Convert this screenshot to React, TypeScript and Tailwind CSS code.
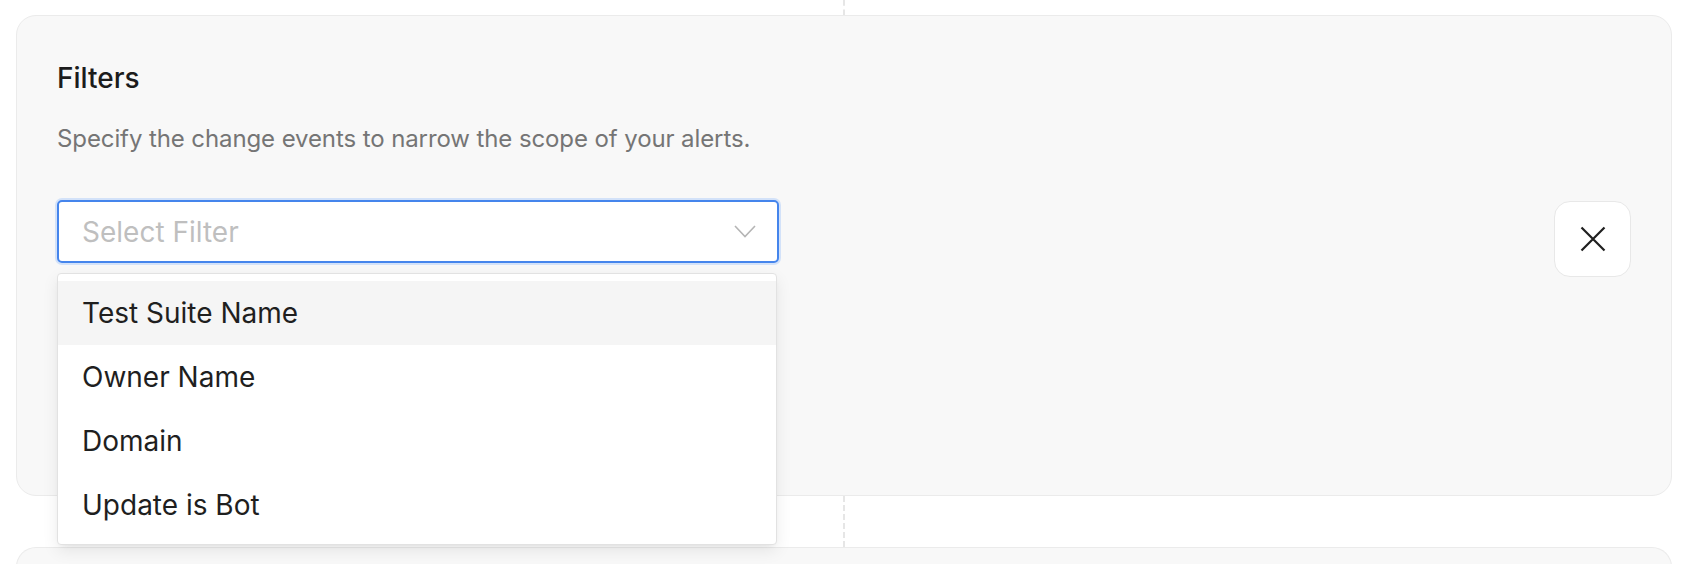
import React from "react";

const items = ["Test Suite Name", "Owner Name", "Domain", "Update is Bot"];

function Connector({ h }: { h: string }) {
  return (
    <div className="flex justify-center">
      <div className={`${h} border-l-2 border-dashed border-[#e6e6e6]`} />
    </div>
  );
}

export default function App() {
  return (
    <div className="h-[564px] overflow-hidden bg-white pl-4 pr-6 font-['Inter','Noto_Sans',sans-serif]">
      <div className="flex justify-center">
        <div className="h-[15px] border-l-2 border-dashed border-[#e6e6e6]" />
      </div>
      <div className="relative z-10 rounded-[20px] border border-[#ebebeb] bg-[#f8f8f8] px-10 pt-[41px] pb-10">
        <div className="text-[28px] leading-[42px] font-medium text-[#1c1c1c]">Filters</div>
        <div className="mt-[22px] text-[24px] leading-[36px] tracking-[-0.1px] text-[#757575]">
          Specify the change events to narrow the scope of your alerts.
        </div>
        <div className="mt-[43px] flex items-start justify-between">
          <div className="relative w-[722px]">
            <div className="flex h-[63px] items-center justify-between rounded-[5px] border-2 border-[#4585ec] bg-white pl-[23px] pr-[21px] ring-2 ring-[#d3e2f9]">
              <span className="text-[28px] leading-none text-[#bfbfbf]">Select Filter</span>
              <svg width="22" height="13" viewBox="0 0 22 13" fill="none">
                <path d="M1 1 L11 11.5 L21 1" stroke="#b5b5b5" strokeWidth="1.6" />
              </svg>
            </div>
            <div className="absolute left-0 top-[73px] z-20 w-[720px] rounded-[4px] border border-[#e2e2e2] bg-white py-[7px] shadow-[0_6px_16px_rgba(0,0,0,0.08),0_3px_6px_-4px_rgba(0,0,0,0.12)]">
              {items.map((t, i) => (
                <div
                  key={t}
                  className={`flex h-16 items-center px-6 text-[28px] text-[#1f1f1f] ${i === 0 ? "bg-[#f5f5f5]" : ""}`}
                >
                  {t}
                </div>
              ))}
            </div>
          </div>
          <button className="mt-px flex h-[76px] w-[77px] items-center justify-center rounded-[16px] border border-[#e8e8e8] bg-white">
            <svg width="26" height="26" viewBox="0 0 26 26" fill="none">
              <path d="M1.5 1.5 L24.5 24.5 M24.5 1.5 L1.5 24.5" stroke="#1f1f1f" strokeWidth="2.2" />
            </svg>
          </button>
        </div>
        <div className="h-[178px]" />
      </div>
      <Connector h="h-[51px]" />
      <div className="h-[40px] rounded-t-[20px] border border-b-0 border-[#ebebeb] bg-[#f8f8f8]" />
    </div>
  );
}
